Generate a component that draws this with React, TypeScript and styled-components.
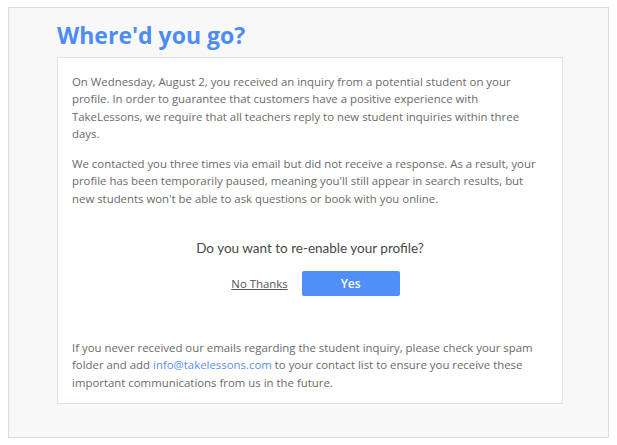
import React from "react";
import styled, { createGlobalStyle } from "styled-components";

const Global = createGlobalStyle`
  html, body { margin: 0; padding: 0; background: #ffffff; }
  body { padding: 7px 8px 0 8px; }
  * { box-sizing: border-box; }
`;

const Panel = styled.section`
  width: 601px;
  height: 431px;
  background: #f8f8f8;
  border: 1px solid #dcdcdc;
  padding: 11px 45px 0 48px;
  font-family: "Open Sans", "Liberation Sans", sans-serif;
`;

const Title = styled.h1`
  margin: 0 0 5px 0;
  font-family: "Open Sans", "Liberation Sans", sans-serif;
  font-weight: 700;
  font-size: 23px;
  line-height: 33px;
  color: #4d8bf5;
  letter-spacing: 0;
`;

const Card = styled.div`
  background: #ffffff;
  border: 1px solid #e0e0e0;
  padding: 15px 14px 12px 14px;
  display: flex;
  flex-direction: column;
`;

const Paragraph = styled.p<{ $gap?: number }>`
  margin: 0 0 ${(p) => p.$gap ?? 0}px 0;
  font-size: 11.4px;
  line-height: 17.3px;
  color: #6a6a6a;
`;

const Question = styled.h2`
  margin: 0;
  text-align: center;
  font-family: Lato, "Open Sans", sans-serif;
  font-weight: 400;
  font-size: 13.5px;
  line-height: 20px;
  color: #474747;
`;

const Actions = styled.div`
  display: flex;
  justify-content: center;
  align-items: center;
  gap: 14px;
  padding-left: 11px;
  margin: 13px 0 43px 0;
`;

const TextButton = styled.button`
  background: none;
  border: none;
  padding: 0;
  font-family: "Open Sans", "Liberation Sans", sans-serif;
  font-size: 11.4px;
  color: #555555;
  text-decoration: underline;
  cursor: pointer;
`;

const PrimaryButton = styled.button`
  width: 98px;
  height: 25px;
  background: #4f8ff7;
  border: none;
  border-radius: 2px;
  color: #ffffff;
  font-family: "Open Sans", "Liberation Sans", sans-serif;
  font-size: 12px;
  font-weight: 600;
  cursor: pointer;
`;

const Link = styled.a`
  color: #5a8ff0;
  text-decoration: none;
`;

export default function App() {
  return (
    <>
      <Global />
      <Panel>
        <Title>Where'd you go?</Title>
        <Card>
          <Paragraph $gap={13}>
            On Wednesday, August 2, you received an inquiry from a potential student on your
            profile. In order to guarantee that customers have a positive experience with
            TakeLessons, we require that all teachers reply to new student inquiries within three
            days.
          </Paragraph>
          <Paragraph $gap={31}>
            We contacted you three times via email but did not receive a response. As a result, your
            profile has been temporarily paused, meaning you'll still appear in search results, but
            new students won't be able to ask questions or book with you online.
          </Paragraph>
          <Question>Do you want to re-enable your profile?</Question>
          <Actions>
            <TextButton>No Thanks</TextButton>
            <PrimaryButton>Yes</PrimaryButton>
          </Actions>
          <Paragraph>
            If you never received our emails regarding the student inquiry, please check your spam
            folder and add <Link href="#">info@takelessons.com</Link> to your contact list to ensure
            you receive these important communications from us in the future.
          </Paragraph>
        </Card>
      </Panel>
    </>
  );
}
